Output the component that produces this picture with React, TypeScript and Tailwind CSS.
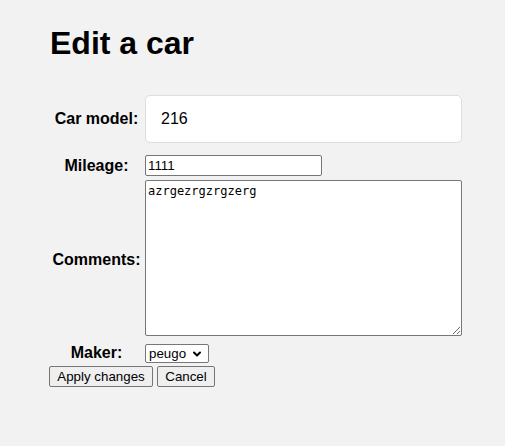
import { ChevronDown } from 'lucide-react';

const labelCls = "w-[93px] shrink-0 text-center text-[16px] font-bold leading-[18px] text-black";

export default function App() {
  return (
    <div className="min-h-screen bg-[#f2f2f2] pl-[49px] pt-[25px] font-['Liberation_Sans',Arial,sans-serif] text-black">
      <h1 className="pl-[1px] text-[32px] font-bold leading-[37px]">Edit a car</h1>

      <form className="mt-[33px] flex flex-col" onSubmit={(e) => e.preventDefault()}>
        {/* Car model */}
        <div className="flex items-center gap-[2px] pl-[1px]">
          <label className={labelCls}>Car model:</label>
          <input
            defaultValue="216"
            className="h-[48px] w-[317px] rounded-[5px] border border-[#dedede] bg-white px-[15px] text-[16px] outline-none"
          />
        </div>

        {/* Mileage */}
        <div className="mt-[12px] flex items-center gap-[2px] pl-[1px]">
          <label className={labelCls}>Mileage:</label>
          <input
            defaultValue="1111"
            className="h-[21px] w-[177px] rounded-[2px] border border-[#767676] bg-white px-[2px] text-[13.33px] outline-none"
          />
        </div>

        {/* Comments */}
        <div className="mt-[4px] flex items-center gap-[2px] pl-[1px]">
          <label className={`${labelCls} pt-[4px]`}>Comments:</label>
          <textarea
            defaultValue="azrgezrgzrgzerg"
            className="h-[156px] w-[317px] resize rounded-[2px] border border-[#767676] bg-white px-[2px] py-[3px] font-['DejaVu_Sans_Mono',monospace] text-[12px] leading-[15px] outline-none"
          />
        </div>

        {/* Maker */}
        <div className="mt-[8px] flex items-center gap-[2px] pl-[1px]">
          <label className={`${labelCls} -mt-[2px]`}>Maker:</label>
          <div className="flex h-[19px] w-[64px] items-center justify-between rounded-[2px] border border-[#767676] bg-white pl-[3px] pr-[5px] text-[13.33px]">
            <span>peugo</span>
            <ChevronDown className="h-[12px] w-[12px]" strokeWidth={4} />
          </div>
        </div>

        {/* Buttons */}
        <div className="mt-[3px] flex gap-[4px]">
          <button
            type="submit"
            className="h-[21px] w-[104px] rounded-[2px] border border-[#767676] bg-[#efefef] text-[13.33px]"
          >
            Apply changes
          </button>
          <button
            type="button"
            className="h-[21px] w-[58px] rounded-[2px] border border-[#767676] bg-[#efefef] text-[13.33px]"
          >
            Cancel
          </button>
        </div>
      </form>
    </div>
  );
}
